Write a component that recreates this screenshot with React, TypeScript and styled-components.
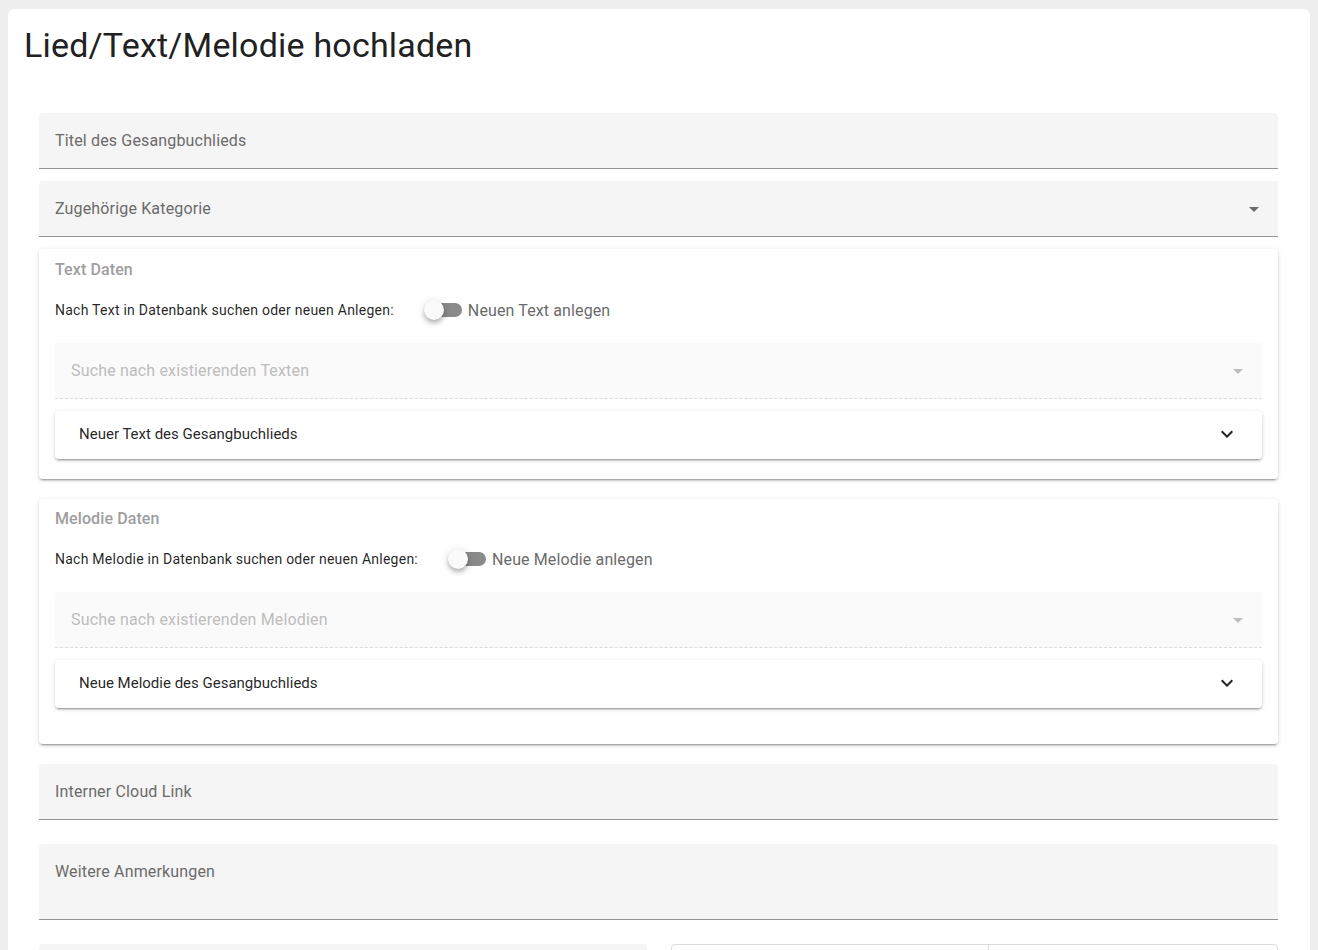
import React from "react";
import styled, { createGlobalStyle } from "styled-components";

const Global = createGlobalStyle`
  html, body { margin: 0; padding: 0; }
  body {
    background: #eeeeee;
    font-family: Roboto, "Noto Sans", Arial, sans-serif;
    color: rgba(0,0,0,0.87);
    overflow: hidden;
  }
  * { box-sizing: border-box; }
`;

const Page = styled.div`
  padding: 9px 8px 0 8px;
  height: 950px;
`;

const Card = styled.div`
  background: #fff;
  border-radius: 6px;
  padding: 16px 0 40px 0;
  min-height: 1200px;
`;

const Title = styled.h1`
  margin: 0 0 0 16px;
  font-size: 34px;
  line-height: 40px;
  font-weight: 400;
  color: #212121;
  letter-spacing: 0.2px;
`;

const Form = styled.div`
  display: flex;
  flex-direction: column;
  padding: 48px 32px 0 31px;
`;

const Field = styled.div<{ $h?: number; $mb?: number; $disabled?: boolean; $alignTop?: boolean }>`
  position: relative;
  height: ${(p) => p.$h ?? 56}px;
  margin-bottom: ${(p) => p.$mb ?? 0}px;
  background: ${(p) => (p.$disabled ? "#fafafa" : "#f5f5f5")};
  border-radius: 4px 4px 0 0;
  border-bottom: 1px ${(p) => (p.$disabled ? "dashed #dcdcdc" : "solid #949494")};
  display: flex;
  align-items: ${(p) => (p.$alignTop ? "flex-start" : "center")};
  padding: ${(p) => (p.$alignTop ? "18px 16px 0 16px" : "0 16px")};
  justify-content: space-between;
`;

const FieldLabel = styled.span<{ $disabled?: boolean }>`
  font-size: 16px;
  line-height: 20px;
  letter-spacing: 0.16px;
  color: ${(p) => (p.$disabled ? "#bdbdbd" : "#6b6b6b")};
`;

const ArrowBox = styled.span<{ $disabled?: boolean }>`
  display: flex;
  width: 24px;
  height: 24px;
  margin-right: -4px;
  color: ${(p) => (p.$disabled ? "#bdbdbd" : "#6b6b6b")};
`;

const Section = styled.div<{ $mb: number; $pb: number }>`
  background: #fff;
  border-radius: 4px;
  box-shadow: 0 3px 1px -2px rgba(0,0,0,0.2), 0 2px 2px 0 rgba(0,0,0,0.14), 0 1px 5px 0 rgba(0,0,0,0.12);
  padding: 10px 16px ${(p) => p.$pb}px 16px;
  margin-bottom: ${(p) => p.$mb}px;
  display: flex;
  flex-direction: column;
`;

const SectionTitle = styled.div<{ $pt: number }>`
  font-size: 16px;
  font-weight: 500;
  line-height: 20px;
  letter-spacing: 0.1px;
  color: #9e9e9e;
  padding-top: ${(p) => p.$pt}px;
`;

const SwitchRow = styled.div`
  display: flex;
  align-items: center;
  height: 24px;
  margin-top: 18px;
  margin-bottom: 21px;
`;

const RowText = styled.span`
  font-size: 14px;
  letter-spacing: 0.25px;
  color: rgba(0,0,0,0.87);
  margin-right: 30px;
`;

const Switch = styled.span`
  position: relative;
  width: 38px;
  height: 24px;
  display: inline-flex;
  align-items: center;
  margin-right: 6px;
`;

const Track = styled.span`
  position: absolute;
  left: 4px;
  right: 0;
  height: 14px;
  border-radius: 7px;
  background: #8a8a8a;
`;

const Thumb = styled.span`
  position: absolute;
  left: 0;
  top: 2px;
  width: 20px;
  height: 20px;
  border-radius: 50%;
  background: #fafafa;
  box-shadow: 0 2px 4px -1px rgba(0,0,0,0.2), 0 4px 5px 0 rgba(0,0,0,0.14), 0 1px 10px 0 rgba(0,0,0,0.12);
`;

const SwitchLabel = styled.span`
  font-size: 16px;
  letter-spacing: 0.12px;
  color: #6b6b6b;
`;

const Panel = styled.div`
  margin-top: 12px;
  height: 48px;
  border-radius: 4px;
  background: #fff;
  box-shadow: 0 3px 1px -2px rgba(0,0,0,0.2), 0 2px 2px 0 rgba(0,0,0,0.14), 0 1px 5px 0 rgba(0,0,0,0.12);
  display: flex;
  align-items: center;
  justify-content: space-between;
  padding: 0 23px 2px 24px;
  font-size: 15px;
  color: rgba(0,0,0,0.87);
`;

const Chevron = styled.span`
  display: flex;
  width: 24px;
  height: 24px;
  color: rgba(0,0,0,0.87);
`;

const BottomRow = styled.div`
  display: grid;
  grid-template-columns: 608px 607px;
  column-gap: 24px;
  margin-top: 24px;
`;

const BottomField = styled.div`
  height: 56px;
  background: #f5f5f5;
  border-radius: 4px 4px 0 0;
`;

const Toggle = styled.div`
  height: 48px;
  border: 1px solid #dcdcdc;
  border-radius: 4px;
  display: grid;
  grid-template-columns: 317px 1fr;
`;

const ToggleCell = styled.div`
  border-right: 1px solid #dcdcdc;
  &:last-child { border-right: none; }
`;

const MenuDown = () => (
  <svg viewBox="0 0 24 24" width="24" height="24" fill="currentColor">
    <path d="M7,10L12,15L17,10H7Z" />
  </svg>
);

const ChevronDown = () => (
  <svg viewBox="0 0 24 24" width="24" height="24" fill="currentColor">
    <path d="M7.41,8.58L12,13.17L16.59,8.58L18,10L12,16L6,10L7.41,8.58Z" />
  </svg>
);

const DataSection = ({
  title,
  rowText,
  switchLabel,
  search,
  panel,
  mb,
  pb,
  pt,
}: {
  title: string;
  rowText: string;
  switchLabel: string;
  search: string;
  panel: string;
  mb: number;
  pb: number;
  pt: number;
}) => (
  <Section $mb={mb} $pb={pb}>
    <SectionTitle $pt={pt}>{title}</SectionTitle>
    <SwitchRow>
      <RowText>{rowText}</RowText>
      <Switch>
        <Track />
        <Thumb />
      </Switch>
      <SwitchLabel>{switchLabel}</SwitchLabel>
    </SwitchRow>
    <Field $disabled>
      <FieldLabel $disabled>{search}</FieldLabel>
      <ArrowBox $disabled>
        <MenuDown />
      </ArrowBox>
    </Field>
    <Panel>
      <span>{panel}</span>
      <Chevron>
        <ChevronDown />
      </Chevron>
    </Panel>
  </Section>
);

export default function App() {
  return (
    <>
      <Global />
      <Page>
        <Card>
          <Title>Lied/Text/Melodie hochladen</Title>
          <Form>
            <Field $mb={12}>
              <FieldLabel>Titel des Gesangbuchlieds</FieldLabel>
            </Field>
            <Field $mb={12}>
              <FieldLabel>Zugehörige Kategorie</FieldLabel>
              <ArrowBox>
                <MenuDown />
              </ArrowBox>
            </Field>
            <DataSection
              title="Text Daten"
              rowText="Nach Text in Datenbank suchen oder neuen Anlegen:"
              switchLabel="Neuen Text anlegen"
              search="Suche nach existierenden Texten"
              panel="Neuer Text des Gesangbuchlieds"
              mb={20}
              pb={20}
              pt={1}
            />
            <DataSection
              title="Melodie Daten"
              rowText="Nach Melodie in Datenbank suchen oder neuen Anlegen:"
              switchLabel="Neue Melodie anlegen"
              search="Suche nach existierenden Melodien"
              panel="Neue Melodie des Gesangbuchlieds"
              mb={20}
              pb={36}
              pt={0}
            />
            <Field $mb={24}>
              <FieldLabel>Interner Cloud Link</FieldLabel>
            </Field>
            <Field $h={76} $alignTop>
              <FieldLabel>Weitere Anmerkungen</FieldLabel>
            </Field>
            <BottomRow>
              <BottomField />
              <Toggle>
                <ToggleCell />
                <ToggleCell />
              </Toggle>
            </BottomRow>
          </Form>
        </Card>
      </Page>
    </>
  );
}
